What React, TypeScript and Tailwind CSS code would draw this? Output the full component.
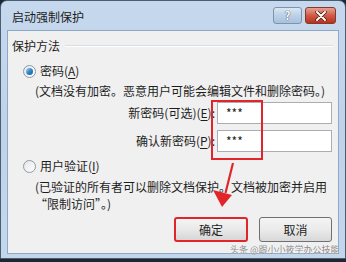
import React from "react";

const font = {
  fontFamily: '"Noto Sans CJK SC", "Noto Sans", sans-serif',
};

function Radio({ checked }: { checked?: boolean }) {
  return (
    <span className="flex h-[13px] w-[13px] items-center justify-center rounded-full border border-[#8e99a6] bg-gradient-to-br from-[#e6e6e6] to-[#ffffff]">
      {checked && (
        <span className="h-[7px] w-[7px] rounded-full bg-gradient-to-br from-[#9fd5f5] via-[#2d87c9] to-[#1a5f9c]" />
      )}
    </span>
  );
}

function FieldRow({ label, hot }: { label: string; hot: string }) {
  const [before, after] = label.split(hot);
  return (
    <div className="flex h-[22px] items-center">
      <div className="w-[209px] pr-[2px] text-right text-[12px] text-[#1e1e1e]">
        {before}
        <span className="underline underline-offset-2">{hot}</span>
        {after}
      </div>
      <div className="flex h-[22px] w-[115px] items-center border border-[#abadb3] bg-white pl-[8px] text-[12px] leading-none text-[#222]">
        ***
      </div>
    </div>
  );
}

export default function App() {
  return (
    <div
      className="relative h-[262px] w-[346px] overflow-hidden bg-[#1c2731]"
      style={font}
    >
      <div className="h-[259px] rounded-t-[7px] border border-[#4b5d70] bg-gradient-to-b from-[#c6d8ed] via-[#bed3ea] to-[#c3d7ec] px-[6px]">
        {/* ----- title bar ----- */}
        <div className="flex h-[29px] items-center pl-[5px] pr-[3px]">
          <span className="flex-1 pt-[3px] text-[12px] text-[#1c1c1c]">启动强制保护</span>
          <div className="flex gap-[3px]">
            <div className="flex h-[17px] w-[29px] items-center justify-center rounded-[3px] border border-[#7e93ad] bg-gradient-to-b from-[#dbe6f3] via-[#bdd0e6] to-[#a9c1de]">
              <span className="text-[11px] font-bold leading-none text-white [text-shadow:0_0_1px_#3b5068,0_0_1px_#3b5068]">
                ?
              </span>
            </div>
            <div className="flex h-[17px] w-[31px] items-center justify-center rounded-[3px] border border-[#85392e] bg-gradient-to-b from-[#e5a193] via-[#cf5b46] to-[#b8301c]">
              <svg width="12" height="10" viewBox="0 0 12 10">
                <path
                  d="M2 1 L10 9 M10 1 L2 9"
                  stroke="#4b1209"
                  strokeWidth="3.4"
                  strokeLinecap="round"
                />
                <path
                  d="M2 1 L10 9 M10 1 L2 9"
                  stroke="#ffffff"
                  strokeWidth="2"
                  strokeLinecap="round"
                />
              </svg>
            </div>
          </div>
        </div>

        {/* ----- client area ----- */}
        <div className="h-[224px] border border-[#8ea8c5] bg-[#f0f0f0] text-[12px] text-[#1e1e1e]">
          <div className="flex items-center pl-[4px] pr-[5px] pt-[7px]">
            <span className="leading-[16px]">保护方法</span>
            <div className="ml-[5px] h-[2px] flex-1 border-t border-b border-t-[#d5dfe5] border-b-white" />
          </div>

          <div className="mt-[9px] flex items-center gap-[4px] pl-[15px]">
            <Radio checked />
            <span className="leading-[16px]">
              密码(<span className="underline underline-offset-2">A</span>)
            </span>
          </div>
          <div className="mt-[4px] whitespace-nowrap pl-[27px] leading-[16px]">
            (文档没有加密。恶意用户可能会编辑文件和删除密码。)
          </div>

          <div className="mt-[3px] flex flex-col gap-[6px]">
            <FieldRow label="新密码(可选)(E):" hot="E" />
            <FieldRow label="确认新密码(P):" hot="P" />
          </div>

          <div className="mt-[6px] flex items-center gap-[4px] pl-[15px]">
            <Radio />
            <span className="leading-[16px]">
              用户验证(<span className="underline underline-offset-2">I</span>)
            </span>
          </div>
          <div className="mt-[4px] pl-[27px] pr-[4px] leading-[17px]">
            <div className="whitespace-nowrap">
              (已验证的所有者可以删除文档保护。文档被加密并启用
            </div>
            <div className="whitespace-nowrap">“限制访问”。)</div>
          </div>

          <div className="mt-[5px] flex justify-end gap-[11px] pr-[6px]">
            <button className="flex h-[25px] w-[74px] items-center justify-center rounded-[3px] border-2 border-[#e0262b] bg-gradient-to-b from-[#f4f4f4] via-[#e9e9e9] to-[#d6d6d6] text-[12px] text-[#1e1e1e]">
              确定
            </button>
            <button className="flex h-[25px] w-[73px] items-center justify-center rounded-[3px] border border-[#707070] bg-gradient-to-b from-[#f4f4f4] via-[#ebebeb] to-[#d8d8d8] text-[12px] text-[#1e1e1e]">
              取消
            </button>
          </div>
        </div>
      </div>

      {/* ----- annotations ----- */}
      <div className="absolute left-[211px] top-[100px] h-[60px] w-[52px] border-2 border-[#e0262b]" />
      <svg
        className="absolute left-0 top-0"
        width="346"
        height="262"
        viewBox="0 0 346 262"
      >
        <path d="M233 163 L225.5 193" stroke="#e0262b" strokeWidth="2.2" />
        <path d="M222 207 L213 190 L232 195 Z" fill="#e0262b" />
      </svg>
      <div className="absolute left-[230px] top-[244px] whitespace-nowrap text-[9px] leading-[12px] text-[#8a8a8a] [text-shadow:0_0_1px_#ffffff]">
        头条 @跟小小筱学办公技能
      </div>
    </div>
  );
}
